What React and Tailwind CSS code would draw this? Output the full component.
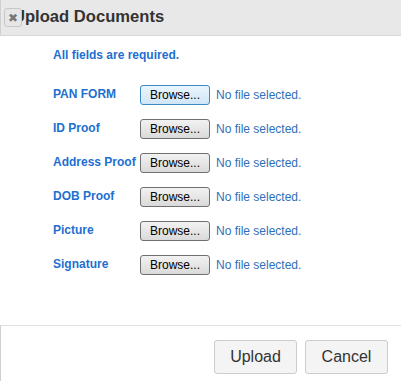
import React from "react";

const rows = ["PAN FORM", "ID Proof", "Address Proof", "DOB Proof", "Picture", "Signature"];

export default function App() {
  return (
    <div className="w-[401px] h-[381px] bg-white relative" style={{ fontFamily: '"Liberation Sans", Arial, sans-serif' }}>
      <div className="h-[36px] bg-[#e8e8e8] border-b border-[#d6d6d6] border-l border-l-[#d0d0d0] relative flex items-center pl-[12px]">
        <span className="text-[16.6px] font-bold text-[#333]">Upload Documents</span>
        <div className="absolute left-[3px] top-[8px] w-[18px] h-[19px] bg-[#e6e6e6] border border-[#c8c8c8] rounded-[3px] flex items-center justify-center text-[12px] text-[#777] leading-none">✖</div>
      </div>
      <div className="pl-[53px] pt-[11px]">
        <div className="text-[12px] font-bold text-[#1e6fd0] leading-[16px]">All fields are required.</div>
        <div className="mt-[15px] flex flex-col">
          {rows.map((r, i) => (
            <div key={r} className="h-[34px] flex items-center">
              <div className="w-[87px] text-[12px] font-bold text-[#1e6fd0] -mt-[2px]">{r}</div>
              <div
                className={
                  "w-[70px] h-[20px] rounded-[3px] border flex items-center justify-center text-[12px] text-black " +
                  (i === 0
                    ? "border-[#3c8bc4] bg-gradient-to-b from-[#eaf5fd] to-[#cfe6f7]"
                    : "border-[#707070] bg-gradient-to-b from-[#f2f2f2] to-[#dadada]")
                }
              >
                Browse...
              </div>
              <div className="ml-[6px] text-[12px] text-[#2f6fb8]">No file selected.</div>
            </div>
          ))}
        </div>
      </div>
      <div className="absolute left-0 right-0 top-[325px] border-t border-[#e0e0e0] border-l border-l-[#d0d0d0] h-[56px] flex justify-end items-start pt-[14px] pr-[13px] gap-[8px]">
        <div className="w-[83px] h-[34px] bg-[#f4f4f4] border border-[#cccccc] rounded-[3px] flex items-center justify-center text-[16px] text-[#333]">Upload</div>
        <div className="w-[83px] h-[34px] bg-[#f4f4f4] border border-[#cccccc] rounded-[3px] flex items-center justify-center text-[16px] text-[#333]">Cancel</div>
      </div>
    </div>
  );
}
